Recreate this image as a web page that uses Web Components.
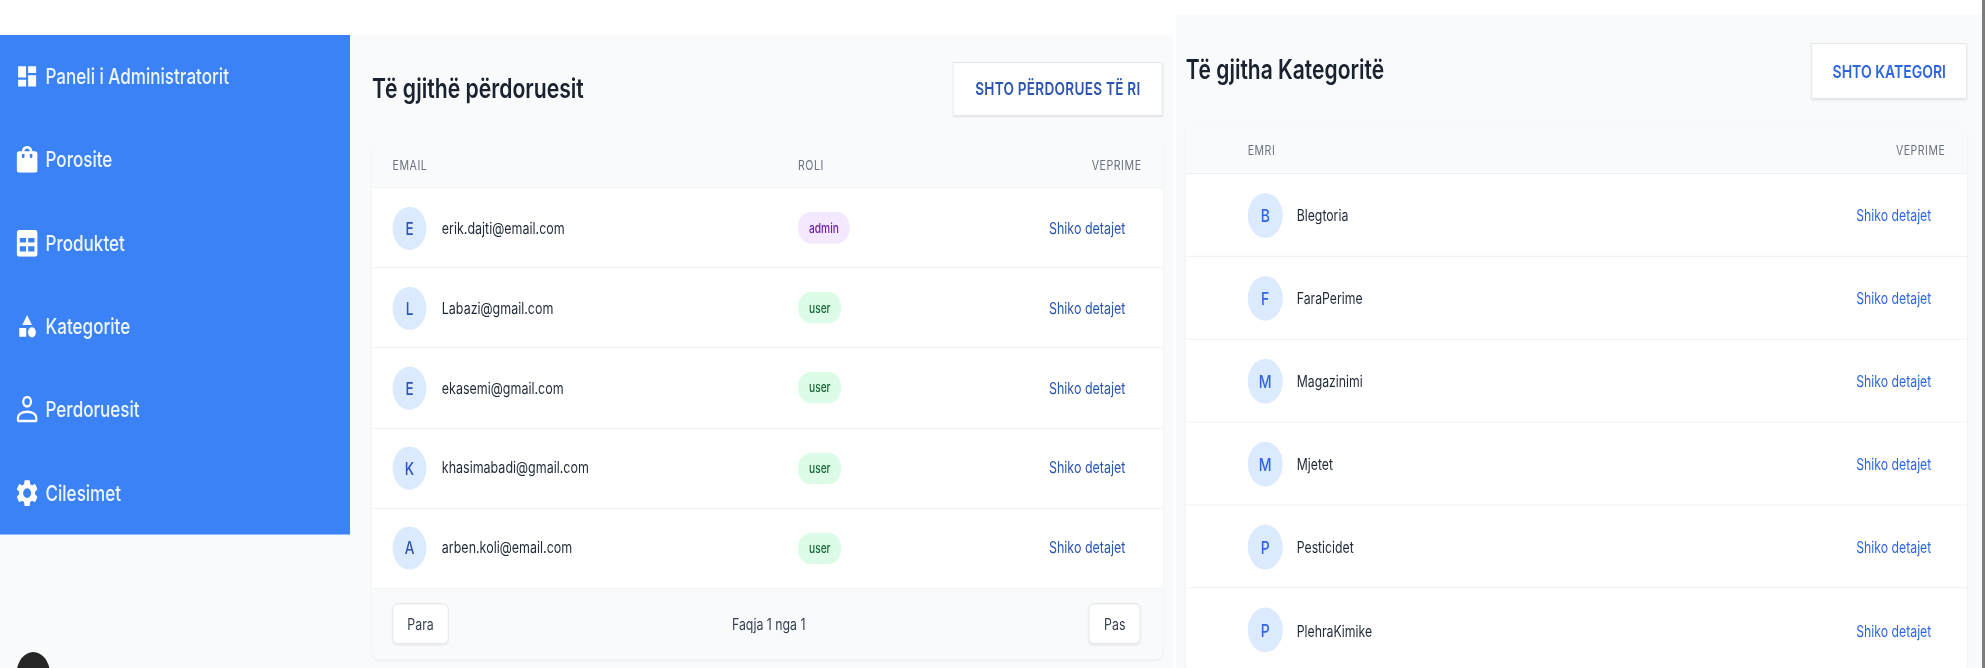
<!DOCTYPE html>
<html lang="sq">
<head>
<meta charset="utf-8">
<title>Paneli i Administratorit</title>
<style>
    html, body { margin: 0; background: #fff; }
    body { font-family: Inter, "Liberation Sans", sans-serif; }
</style>
</head>
<body>
<app-shell>
    <scale-box style="--w:350px;--top:35px;--sx:.875;--sy:1.12">
        <side-bar>
            <nav-item label="Paneli i Administratorit"><svg slot="icon" viewBox="1.500 0 21 24" preserveAspectRatio="none" fill="currentColor"><path d="M3 13h8V3H3v10zm0 8h8v-6H3v6zm10 0h8V11h-8v10zm0-18v6h8V3h-8z"/></svg></nav-item>
            <nav-item label="Porosite"><svg slot="icon" viewBox="4 2 16 20" preserveAspectRatio="none" fill="currentColor"><path d="M18 6h-2c0-2.21-1.79-4-4-4S8 3.79 8 6H6c-1.1 0-2 .9-2 2v12c0 1.1.9 2 2 2h12c1.1 0 2-.9 2-2V8c0-1.1-.9-2-2-2zm-8 4c0 .55-.45 1-1 1s-1-.45-1-1V8h2v2zm2-6c1.1 0 2 .9 2 2h-4c0-1.1.9-2 2-2zm4 6c0 .55-.45 1-1 1s-1-.45-1-1V8h2v2z"/></svg></nav-item>
            <nav-item label="Produktet"><svg slot="icon" viewBox="2 3 20 18" preserveAspectRatio="none" fill="currentColor"><path fill-rule="evenodd" d="M4.500 3h15A2.500 2.500 0 0 1 22 5.500v13a2.500 2.500 0 0 1-2.500 2.500h-15A2.500 2.500 0 0 1 2 18.500v-13A2.500 2.500 0 0 1 4.500 3zM5 8.500v3h6v-3zm8 0v3h6v-3zM5 14v3.500h6V14zm8 0v3.500h6V14z"/></svg></nav-item>
            <nav-item label="Kategorite"><svg slot="icon" viewBox="0 0 24 24" preserveAspectRatio="none" fill="currentColor"><path d="M12 2l-5.500 9h11z"/><circle cx="17.500" cy="17.500" r="4.500"/><path d="M3 13.500h8v8H3z"/></svg></nav-item>
            <nav-item label="Perdoruesit"><svg slot="icon" viewBox="2.500 2 19 20" preserveAspectRatio="none" fill="none" stroke="currentColor" stroke-width="2"><circle cx="12" cy="6.500" r="3.500"/><path d="M3.500 19.500c0-3.600 3.800-5.500 8.500-5.500s8.500 1.900 8.500 5.500c0 1-.8 1.500-1.800 1.500H5.300c-1 0-1.800-.5-1.800-1.500z"/></svg></nav-item>
            <nav-item label="Cilesimet"><svg slot="icon" viewBox="2.500 2 19 20" preserveAspectRatio="none" fill="currentColor"><path d="M19.140 12.940c.04-.3.06-.61.06-.94 0-.32-.02-.64-.07-.94l2.030-1.580c.18-.14.23-.41.12-.61l-1.920-3.320c-.12-.22-.37-.29-.59-.22l-2.390.96c-.5-.38-1.030-.7-1.620-.94l-.36-2.540c-.04-.24-.24-.41-.48-.41h-3.840c-.24 0-.43.17-.47.41l-.36 2.540c-.59.24-1.130.57-1.620.94l-2.390-.96c-.22-.08-.47 0-.59.22L2.740 8.870c-.12.21-.08.47.12.61l2.030 1.580c-.05.3-.09.63-.09.94s.02.64.07.94l-2.030 1.580c-.18.14-.23.41-.12.61l1.920 3.320c.12.22.37.29.59.22l2.390-.96c.5.38 1.030.7 1.620.94l.36 2.540c.05.24.24.41.48.41h3.840c.24 0 .44-.17.47-.41l.36-2.540c.59-.24 1.130-.56 1.620-.94l2.390.96c.22.08.47 0 .59-.22l1.920-3.320c.12-.22.07-.47-.12-.61l-2.010-1.580zM12 15.600c-1.980 0-3.600-1.620-3.600-3.600s1.620-3.600 3.600-3.600 3.600 1.620 3.600 3.600-1.620 3.600-3.600 3.600z"/></svg></nav-item>
        </side-bar>
    </scale-box>

    <scale-box style="--w:823px;--top:35px;--sx:.85;--sy:1.08;--pl:26px;--pr:12px;--cell:24px;--c1:477px;--head:43px;--row:74.2px;--link-pr:44px;--gap:18px;--font:14.700px;--head-font:12.500px;--title:24.900px;--btn-font:16px;--btn-ls:.3px;--btn-w:247px;--ink:#2b55b0">
        <data-panel heading="Të gjithë përdoruesit" action="Shto përdorues të ri">
            <data-head first="Email" second="Roli"></data-head>
            <data-row letter="E" text="erik.dajti@email.com" role="admin"></data-row>
            <data-row letter="L" text="Labazi@gmail.com" role="user"></data-row>
            <data-row letter="E" text="ekasemi@gmail.com" role="user"></data-row>
            <data-row letter="K" text="khasimabadi@gmail.com" role="user"></data-row>
            <data-row letter="A" text="arben.koli@email.com" role="user"></data-row>
            <pager-bar></pager-bar>
        </data-panel>
    </scale-box>

    <scale-box style="--w:806px;--top:15px;--ml:3px;--sx:.875;--sy:1.12;--pl:11px;--pr:17px;--cell:71px;--c1:600px;--head:43px;--row:74.1px;--link-pr:41px;--gap:16px;--font:14px;--head-font:12px;--title:24px;--btn-font:16px;--btn-ls:0;--btn-w:178px;--ink:#2f66e0">
        <data-panel heading="Të gjitha Kategoritë" action="Shto kategori">
            <data-head first="Emri"></data-head>
            <data-row letter="B" text="Blegtoria"></data-row>
            <data-row letter="F" text="FaraPerime"></data-row>
            <data-row letter="M" text="Magazinimi"></data-row>
            <data-row letter="M" text="Mjetet"></data-row>
            <data-row letter="P" text="Pesticidet"></data-row>
            <data-row letter="P" text="PlehraKimike"></data-row>
        </data-panel>
    </scale-box>
</app-shell>

<script>
// clase base: plantilla + estilos en el shadow root
class BaseElement extends HTMLElement {
    constructor(){
        super();
        this.attachShadow({ mode: "open" });
    }
    connectedCallback(){
        const template = document.createElement('template');
        template.innerHTML = `<style>${this.getStyles()}</style>${this.getTemplate()}`;
        this.shadowRoot.appendChild(template.content.cloneNode(true));
    }
    attr(name){
        return this.getAttribute(name) || '';
    }
}

class AppShell extends BaseElement {
    getTemplate(){ return `<slot></slot>`; }
    getStyles(){
        return `
            :host { display: flex; width: 1986px; height: 668px; overflow: hidden; background: #fff; }
            /* linea gris del borde derecho */
            :host::after { content: ''; flex: none; width: 3px; background: #7d7d7d; }
        `;
    }
}

// la captura original esta estirada: cada columna lleva su propia escala
class ScaleBox extends BaseElement {
    getTemplate(){ return `<div class="inner"><slot></slot></div>`; }
    getStyles(){
        return `
            :host { display: block; flex: none; width: var(--w); height: calc(668px - var(--top));
                    margin-top: var(--top); margin-left: var(--ml, 0); overflow: hidden; background: #f9fafb; }
            .inner { width: calc(var(--w) / var(--sx)); transform: scale(var(--sx), var(--sy));
                     transform-origin: 0 0; filter: blur(.55px); }
        `;
    }
}

class SideBar extends BaseElement {
    getTemplate(){ return `<nav><slot></slot></nav><div class="dot"></div>`; }
    getStyles(){
        return `
            :host { display: block; font-family: Inter, "Liberation Sans", sans-serif; }
            nav { display: flex; flex-direction: column; height: 446px; background: #3b82f6; }
            .dot { width: 38px; height: 38px; margin: 105px 0 0 19px; border-radius: 50%; background: #262626; }
        `;
    }
}

class NavItem extends BaseElement {
    getTemplate(){ return `<span class="icon"><slot name="icon"></slot></span><span>${this.attr('label')}</span>`; }
    getStyles(){
        return `
            :host { display: flex; flex: 1; align-items: center; gap: 9px; padding-left: 19px;
                    color: #eef6ff; font-size: 19.500px; font-weight: 500; }
            .icon { display: flex; width: 24px; height: 24px; color: #fff; }
            ::slotted(svg) { width: 24px; height: 24px; }
        `;
    }
}

class DataPanel extends BaseElement {
    getTemplate(){
        return `
            <header><h2>${this.attr('heading')}</h2><button>${this.attr('action')}</button></header>
            <section><slot></slot></section>
        `;
    }
    getStyles(){
        return `
            :host { display: block; padding: 25px var(--pr) 0 var(--pl); font-family: Inter, "Liberation Sans", sans-serif; }
            header { display: flex; align-items: center; justify-content: space-between; height: 50px; margin-bottom: 24px; }
            h2 { margin: -3px 0 0; font-size: var(--title); font-weight: 600; color: #1a2230; }
            button { width: var(--btn-w); height: 50px; padding: 0; background: #fff; border: 1px solid #e5e7eb;
                     box-shadow: 0 1px 2px rgba(0,0,0,.1); font: 600 var(--btn-font) Inter, "Liberation Sans", sans-serif;
                     letter-spacing: var(--btn-ls); text-transform: uppercase; color: var(--ink); }
            section { background: #fff; border-radius: 8px; box-shadow: 0 1px 3px rgba(0,0,0,.06); overflow: hidden; }
        `;
    }
}

class DataHead extends BaseElement {
    getTemplate(){
        return `<span class="first">${this.attr('first')}</span><span class="second">${this.attr('second')}</span><span>Veprime</span>`;
    }
    getStyles(){
        return `
            :host { display: flex; align-items: center; height: var(--head); padding: 0 25px 0 var(--cell);
                    background: #f9fafb; border-bottom: 1px solid #eef0f2; box-sizing: border-box;
                    font-size: var(--head-font); text-transform: uppercase; letter-spacing: .05em; color: #6b7280; }
            .first { width: var(--c1); }
            .second { flex: 1; }
        `;
    }
}

class DataRow extends BaseElement {
    getTemplate(){
        const role = this.attr('role');
        return `
            <div class="first"><span class="avatar">${this.attr('letter')}</span><span class="text">${this.attr('text')}</span></div>
            <div class="second">${role ? `<span class="badge ${role}">${role}</span>` : ''}</div>
            <a>Shiko detajet</a>
        `;
    }
    getStyles(){
        return `
            :host { display: flex; align-items: center; height: var(--row); padding: 0 var(--link-pr) 0 var(--cell); box-sizing: border-box;
                    background: #fff; border-bottom: 1px solid #f0f1f3; font-size: var(--font); }
            .first { display: flex; align-items: center; gap: var(--gap); width: var(--c1); }
            .second { flex: 1; }
            .avatar { display: flex; align-items: center; justify-content: center; width: 40px; height: 40px;
                      border-radius: 50%; background: #dbeafe; color: var(--ink); font-size: 16px; font-weight: 500; }
            .text { color: #1f2937; }
            .badge { display: inline-block; padding: 0 13px; line-height: 29px; border-radius: 15px; font-size: 12px; font-weight: 500; }
            .admin { background: #f3e8ff; color: #6b21a8; }
            .user { background: #dcfce7; color: #166534; }
            a { color: var(--ink); white-space: nowrap; }
        `;
    }
}

class PagerBar extends BaseElement {
    getTemplate(){ return `<button class="para">Para</button><span>Faqja 1 nga 1</span><button class="pas">Pas</button>`; }
    getStyles(){
        return `
            :host { display: flex; align-items: center; justify-content: space-between; height: 65px; padding: 0 26px 0 24px;
                    box-sizing: border-box; background: #f9fafb; font-size: 14.500px; color: #374151; }
            button { height: 38px; padding: 0; background: #fff; border: 1px solid #e5e7eb; border-radius: 6px;
                     box-shadow: 0 1px 2px rgba(0,0,0,.05); font: 14.500px Inter, "Liberation Sans", sans-serif; color: #374151; }
            .para { width: 66px; }
            .pas { width: 61px; }
        `;
    }
}

customElements.define('app-shell', AppShell);
customElements.define('scale-box', ScaleBox);
customElements.define('side-bar', SideBar);
customElements.define('nav-item', NavItem);
customElements.define('data-panel', DataPanel);
customElements.define('data-head', DataHead);
customElements.define('data-row', DataRow);
customElements.define('pager-bar', PagerBar);
</script>
</body>
</html>
